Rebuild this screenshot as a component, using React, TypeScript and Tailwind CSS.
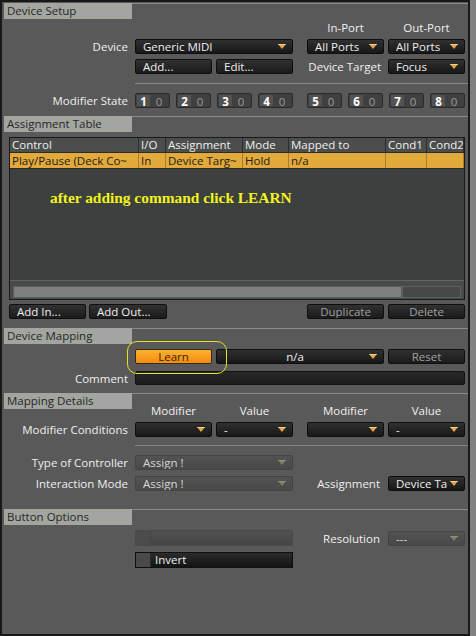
import React from "react";
import clsx from "clsx";

type Ctl = { className?: string; dim?: boolean; center?: boolean };

function Arrow({ dim }: { dim?: boolean }) {
  return (
    <svg width="8" height="5" viewBox="0 0 8 5" className="ml-[3px] shrink-0">
      <path d="M0 0h8L4 5z" fill={dim ? "#857a66" : "#e2a649"} />
      <path d="M0 0h8l-.6 1H.6z" fill={dim ? "#9a9078" : "#f6cf7e"} />
    </svg>
  );
}

function Select({ value = "", className, dim, center }: Ctl & { value?: string }) {
  return (
    <div
      className={clsx(
        "flex h-[15px] shrink-0 items-center rounded-[2px] border pl-[7px] pr-[6px] leading-[13px]",
        dim
          ? "border-[#444444] bg-linear-to-b from-[#525252] to-[#494949] text-[#d6d6d6]"
          : "border-[#0e0e0e] bg-linear-to-b from-[#303030] to-[#181818] text-[#eeeeee]",
        className
      )}
    >
      <span className={clsx("flex-1 overflow-hidden whitespace-nowrap", center && "text-center")}>{value}</span>
      <Arrow dim={dim} />
    </div>
  );
}

function Btn({ label, className, dim, center }: Ctl & { label: string }) {
  return (
    <div
      className={clsx(
        "flex h-[15px] shrink-0 items-center overflow-hidden whitespace-nowrap rounded-[2px] border border-[#0e0e0e] bg-linear-to-b from-[#313131] to-[#1b1b1b] leading-[13px]",
        center ? "justify-center" : "pl-[7px]",
        dim ? "text-[#a0a0a0]" : "text-[#eeeeee]",
        className
      )}
    >
      {label}
    </div>
  );
}

function Head({ title, className }: { title: string; className?: string }) {
  return (
    <div className={clsx("flex h-[16px] shrink-0", className)}>
      <div className="ml-[2px] w-[128px] bg-[#a3a6a0] pl-[3px] leading-[16px] text-[#262626]">{title}</div>
      <div className="flex-1 border-t border-[#8b8b8b]" />
    </div>
  );
}

function Rule({ className }: { className?: string }) {
  return <div className={clsx("ml-[133px] h-px shrink-0 bg-[#868686]", className)} />;
}

function Row({ label = "", className, children }: { label?: string; className?: string; children: React.ReactNode }) {
  return (
    <div className={clsx("flex shrink-0 items-center", className)}>
      <div className="w-[126px] shrink-0 whitespace-nowrap text-right leading-[13px]">{label}</div>
      <div className="ml-[7px] flex items-center gap-[4px]">{children}</div>
    </div>
  );
}

// spacer between the two column pairs (4 + 6 + 4 = 14px)
function Gap() {
  return <div className="w-[6px] shrink-0" />;
}

function ModBox({ n }: { n: number }) {
  return (
    <div className="flex h-[15px] w-[35px] items-stretch rounded-[2px] border border-[#2b2b2b] bg-[#404040] p-px leading-[13px]">
      <span className="w-[13px] bg-[#525252] text-center font-bold text-white">{n}</span>
      <span className="flex-1 text-center text-[#9a9a9a]">0</span>
    </div>
  );
}

const columns = [
  { name: "Control", w: "w-[129px]", v: "Play/Pause (Deck Co~" },
  { name: "I/O", w: "w-[27px]", v: "In" },
  { name: "Assignment", w: "w-[77px]", v: "Device Targ~" },
  { name: "Mode", w: "w-[46px]", v: "Hold" },
  { name: "Mapped to", w: "w-[97px]", v: "n/a" },
  { name: "Cond1", w: "w-[41px]", v: "" },
  { name: "Cond2", w: "flex-1", v: "" },
];

function AssignmentTable() {
  return (
    <div className="ml-[7px] mt-[5px] flex h-[163px] w-[456px] shrink-0 flex-col border border-[#1a1a1a] bg-[#3c403f]">
      <div className="flex h-[15px] shrink-0 border-b border-[#2a2c2b] bg-[#4b4e4c]">
        {columns.map((c) => (
          <div key={c.name} className={clsx("overflow-hidden whitespace-nowrap border-r border-[#2c2e2d] pl-[2px] leading-[14px]", c.w)}>
            {c.name}
          </div>
        ))}
      </div>
      <div className="flex h-[16px] shrink-0 border-b border-[#2a2a2a] bg-[#e2aa3b] text-[#1c1c1c]">
        {columns.map((c) => (
          <div key={c.name} className={clsx("overflow-hidden whitespace-nowrap border-r border-[#a87d2b] pl-[2px] leading-[15px]", c.w)}>
            {c.v}
          </div>
        ))}
      </div>
      <div className="flex-1 whitespace-nowrap pl-[40px] pt-[20px] font-['Liberation_Serif',serif] text-[15.4px] font-bold leading-[17px] text-[#f4f41c]">
        after adding command click LEARN
      </div>
      <div className="h-[19px] shrink-0 border-t border-[#5f6461] bg-[#474b49] px-[3px] pt-[5px]">
        <div className="flex h-[12px]">
          <div className="w-[389px] border border-[#5b605c] bg-[#7b807c]" />
          <div className="flex-1 border border-[#5b605c] bg-[#454a47]" />
        </div>
      </div>
    </div>
  );
}

export default function App() {
  return (
    <div className="relative flex h-[636px] w-[476px] overflow-hidden bg-[#808380] font-['Open_Sans',sans-serif] text-[11.5px] font-medium leading-[13px] text-[#efefef]">
      <div className="flex h-full w-[470px] flex-col border-2 border-[#181818] bg-[#595959]">
        {/* Device Setup */}
        <Head title="Device Setup" className="mt-[1px]" />
        <div className="mt-[3px] flex h-[12px] shrink-0 items-center gap-[4px] pl-[305px] leading-[12px]">
          <div className="w-[77px] text-center">In-Port</div>
          <div className="w-[77px] text-center">Out-Port</div>
        </div>
        <Row label="Device" className="mt-[5px]">
          <Select value="Generic MIDI" className="w-[158px]" />
          <Gap />
          <Select value="All Ports" className="w-[77px]" />
          <Select value="All Ports" className="w-[77px]" />
        </Row>
        <Row className="mt-[5px]">
          <Btn label="Add..." className="w-[77px]" />
          <Btn label="Edit..." className="w-[77px]" />
          <Gap />
          <div className="w-[77px] whitespace-nowrap pr-[3px] text-right">Device Target</div>
          <Select value="Focus" className="w-[77px]" />
        </Row>
        <Rule className="mt-[9px]" />
        <Row label="Modifier State" className="mt-[9px]">
          <div className="flex gap-[6px]">
            {[1, 2, 3, 4].map((n) => (
              <ModBox key={n} n={n} />
            ))}
          </div>
          <Gap />
          <div className="flex gap-[6px]">
            {[5, 6, 7, 8].map((n) => (
              <ModBox key={n} n={n} />
            ))}
          </div>
        </Row>

        {/* Assignment Table */}
        <Head title="Assignment Table" className="mt-[8px]" />
        <AssignmentTable />
        <div className="ml-[7px] mt-[4px] flex h-[15px] shrink-0">
          <Btn label="Add In..." className="w-[77px]" />
          <Btn label="Add Out..." className="ml-[3px] w-[78px]" />
          <Btn label="Duplicate" dim center className="ml-[140px] w-[77px]" />
          <Btn label="Delete" dim center className="ml-[4px] w-[77px]" />
        </div>

        {/* Device Mapping */}
        <Head title="Device Mapping" className="mt-[9px]" />
        <Row className="mt-[5px]">
          <div className="flex h-[15px] w-[77px] items-center justify-center rounded-[2px] border border-[#3b2a0e] bg-linear-to-b from-[#ffb02e] to-[#f08d0e] leading-[13px] text-[#3a1f00]">
            Learn
          </div>
          <Select value="n/a" center className="w-[168px]" />
          <Btn label="Reset" dim center className="w-[77px]" />
        </Row>
        <Row label="Comment" className="mt-[7px]">
          <div className="h-[14px] w-[330px] rounded-[2px] border border-[#111111] bg-linear-to-b from-[#282828] to-[#1b1b1b]" />
        </Row>

        {/* Mapping Details */}
        <Head title="Mapping Details" className="mt-[8px]" />
        <div className="-mt-[6px] flex h-[15px] shrink-0 items-center gap-[4px] pl-[133px] leading-[15px]">
          <div className="w-[77px] text-center">Modifier</div>
          <div className="w-[77px] text-center">Value</div>
          <Gap />
          <div className="w-[77px] text-center">Modifier</div>
          <div className="w-[77px] text-center">Value</div>
        </div>
        <Row label="Modifier Conditions" className="mt-[4px]">
          <Select className="w-[77px]" />
          <Select value="-" className="w-[77px]" />
          <Gap />
          <Select className="w-[77px]" />
          <Select value="-" className="w-[77px]" />
        </Row>
        <Rule className="mt-[8px]" />
        <Row label="Type of Controller" className="mt-[9px]">
          <Select value="Assign !" dim className="w-[158px]" />
        </Row>
        <Row label="Interaction Mode" className="mt-[6px]">
          <Select value="Assign !" dim className="w-[158px]" />
          <Gap />
          <div className="w-[77px] whitespace-nowrap pr-[4px] text-right">Assignment</div>
          <Select value="Device Ta" className="w-[77px]" />
        </Row>

        {/* Button Options */}
        <Head title="Button Options" className="mt-[18px]" />
        <Row className="mt-[5px]">
          <div className="flex h-[16px] w-[158px] border border-[#4a4a4a]">
            <div className="w-[15px] border-r border-[#444444] bg-[#4c4c4c]" />
            <div className="flex-1 bg-linear-to-b from-[#515151] to-[#454545]" />
          </div>
          <Gap />
          <div className="w-[77px] whitespace-nowrap pr-[4px] text-right">Resolution</div>
          <Select value="---" dim className="w-[77px] text-[#a4a4a4]" />
        </Row>
        <Row className="mt-[6px]">
          <div className="flex h-[16px] w-[158px] border border-[#101010]">
            <div className="w-[15px] border-r border-[#2a2a2a] bg-[#4a4a4a]" />
            <div className="flex-1 bg-linear-to-b from-[#2c2c2c] to-[#141414] pl-[4px] leading-[14px] text-[#f0f0f0]">Invert</div>
          </div>
        </Row>
      </div>

      {/* highlight ring drawn around the Learn button */}
      <div className="absolute left-[127px] top-[341px] h-[33px] w-[100px] rounded-[10px] border border-[#e4e41c]" />
    </div>
  );
}
